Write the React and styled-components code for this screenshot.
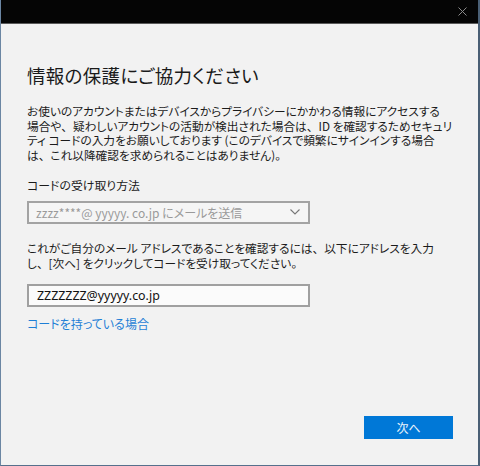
import React from "react";
import styled, { createGlobalStyle } from "styled-components";

const Global = createGlobalStyle`
  html, body { margin: 0; padding: 0; background: #5f7e9c; }
  body { width: 480px; height: 466px; overflow: hidden; }
  * { box-sizing: border-box; }
`;

const Win = styled.div`
  width: 480px;
  height: 466px;
  display: flex;
  flex-direction: column;
  background: #f2f2f2;
  border-left: 1px solid #6b86a3;
  border-right: 2px solid #4a5f75;
  border-bottom: 1px solid #56708c;
  font-family: "Noto Sans CJK JP", "Noto Sans", sans-serif;
  font-feature-settings: "palt";
  color: #1b1b1b;
`;

const TitleBar = styled.div`
  height: 24px;
  flex: none;
  background: #050505;
  border-bottom: 1px solid #5a5a5a;
  display: flex;
  justify-content: flex-end;
  align-items: center;
  padding-right: 11px;
`;

const Close = styled.svg`
  width: 9px;
  height: 9px;
  margin-top: -1px;
`;

const Body = styled.div`
  flex: 1;
  display: flex;
  flex-direction: column;
  padding: 38px 25px 26px 26px;
`;

const Title = styled.h1`
  margin: 0;
  font-size: 18.5px;
  font-weight: 400;
  line-height: 26px;
  letter-spacing: 0.3px;
  color: #1a1a1a;
`;

const Para = styled.p`
  margin: ${(p) => p.$mt || 0}px 0 0;
  font-size: 11.7px;
  line-height: 14.6px;
  white-space: nowrap;
`;

const Punct = styled.span`
  font-feature-settings: normal;
`;

const Label = styled.div`
  margin-top: 16px;
  font-size: 11.9px;
  line-height: 14.6px;
`;

const Select = styled.div`
  margin-top: 8px;
  width: 283px;
  height: 23px;
  border: 2px solid #a3a3a3;
  background: #f5f5f5;
  display: flex;
  align-items: center;
  justify-content: space-between;
  padding: 0 8px 0 7px;
  color: #9a9a9a;
  font-size: 12px;
`;

const Chevron = styled.svg`
  width: 10px;
  height: 6px;
`;

const Input = styled.div`
  margin-top: 14px;
  width: 283px;
  height: 23px;
  border: 2px solid #a0a0a0;
  background: #fbfbfb;
  display: flex;
  align-items: center;
  padding: 0 8px;
  font-family: "Noto Sans", "Noto Sans CJK JP", sans-serif;
  font-size: 12.4px;
  color: #111;
`;

const Link = styled.a`
  margin-top: 9px;
  font-size: 12px;
  line-height: 16px;
  color: #1e7fd6;
  text-decoration: none;
`;

const Footer = styled.div`
  margin-top: auto;
  display: flex;
  justify-content: flex-end;
`;

const Button = styled.button`
  width: 89px;
  height: 23px;
  border: none;
  background: #0078d7;
  color: #eaf3fb;
  font-family: inherit;
  font-size: 12px;
  padding: 0;
`;

const C = () => <Punct>、</Punct>;

export default function App() {
  return (
    <>
      <Global />
      <Win>
        <TitleBar>
          <Close viewBox="0 0 9 9">
            <path d="M0.5 0.5 L8.5 8.5 M8.5 0.5 L0.5 8.5" stroke="#8a8a8a" strokeWidth="1" />
          </Close>
        </TitleBar>
        <Body>
          <Title>情報の保護にご協力ください</Title>
          <Para $mt={16}>
            お使いのアカウントまたはデバイスからプライバシーにかかわる情報にアクセスする
            <br />
            場合や<C />疑わしいアカウントの活動が検出された場合は<C />ID を確認するためセキュリ
            <br />
            ティ コードの入力をお願いしております (このデバイスで頻繁にサインインする場合
            <br />
            は<C />これ以降確認を求められることはありません)。
          </Para>
          <Label>コードの受け取り方法</Label>
          <Select>
            <span>zzzz****@ yyyyy. co.jp にメールを送信</span>
            <Chevron viewBox="0 0 10 6">
              <path d="M0.5 0.5 L5 5 L9.5 0.5" fill="none" stroke="#777" strokeWidth="1.1" />
            </Chevron>
          </Select>
          <Para $mt={17}>
            これがご自分のメール アドレスであることを確認するには<C />以下にアドレスを入力
            <br />
            し<C />[次へ] をクリックしてコードを受け取ってください。
          </Para>
          <Input>ZZZZZZZ@yyyyy.co.jp</Input>
          <Link href="#">コードを持っている場合</Link>
          <Footer>
            <Button>次へ</Button>
          </Footer>
        </Body>
      </Win>
    </>
  );
}
